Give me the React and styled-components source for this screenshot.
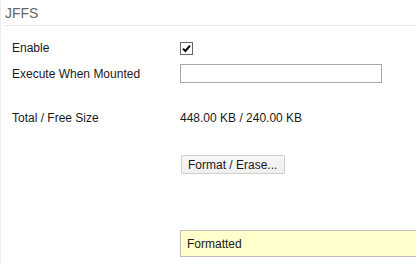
import React from "react";
import styled, { createGlobalStyle } from "styled-components";

const Global = createGlobalStyle`
  html, body { margin: 0; padding: 0; background: #fff; overflow: hidden; }
  body { font-family: "Liberation Sans", Arial, sans-serif; font-size: 12px; color: #1a1a1a; }
`;

const Page = styled.div`
  width: 416px;
  height: 264px;
  box-sizing: border-box;
  border-left: 1px solid #ededed;
  overflow: hidden;
`;

const Header = styled.div`
  margin-left: 4px;
  height: 25px;
  display: flex;
  align-items: center;
  border-bottom: 1px solid #e6e6e6;
  font-size: 14px;
  color: #666;
`;

const Row = styled.div`
  display: grid;
  grid-template-columns: 168px 1fr;
  align-items: center;
  padding-left: 11px;
  height: ${(p) => p.$h}px;
  margin-top: ${(p) => p.$mt}px;
`;

const Label = styled.div`
  color: #1a1a1a;
`;

const Value = styled.div`
  display: flex;
  align-items: center;
  color: #1a1a1a;
`;

const Check = styled.span`
  width: 11px;
  height: 11px;
  border: 1px solid #666;
  background: #fff;
  display: inline-flex;
  align-items: center;
  justify-content: center;
`;

const TextInput = styled.input`
  box-sizing: border-box;
  width: 202px;
  height: 19px;
  border: 1px solid #a9a9a9;
  margin: 0;
  padding: 0 3px;
  font: inherit;
  outline: none;
`;

const Button = styled.button`
  box-sizing: border-box;
  margin: 0 0 0 1px;
  height: 19px;
  width: 104px;
  padding: 0 6px;
  border: 1px solid #cfcfcf;
  background: linear-gradient(#f7f7f7, #efefef);
  font: inherit;
  color: #1a1a1a;
  text-align: left;
  border-radius: 1px;
`;

const Status = styled.div`
  box-sizing: border-box;
  width: 260px;
  height: 27px;
  background: #ffffcc;
  border: 1px solid #c9b8b8;
  display: flex;
  align-items: center;
  padding-left: 6px;
  color: #1a1a1a;
`;

export default function App() {
  return (
    <>
      <Global />
      <Page>
        <Header>JFFS</Header>
        <Row $h={20} $mt={12}>
          <Label>Enable</Label>
          <Value>
            <Check>
              <svg width="9" height="9" viewBox="0 0 9 9">
                <path d="M1 4.6 L3.4 7 L8 1.6" fill="none" stroke="#000" strokeWidth="2" />
              </svg>
            </Check>
          </Value>
        </Row>
        <Row $h={19} $mt={6}>
          <Label>Execute When Mounted</Label>
          <Value>
            <TextInput type="text" defaultValue="" />
          </Value>
        </Row>
        <Row $h={20} $mt={25}>
          <Label>Total / Free Size</Label>
          <Value>448.00 KB / 240.00 KB</Value>
        </Row>
        <Row $h={19} $mt={27}>
          <Label />
          <Value>
            <Button>Format / Erase...</Button>
          </Value>
        </Row>
        <Row $h={27} $mt={56}>
          <Label />
          <Value>
            <Status>Formatted</Status>
          </Value>
        </Row>
      </Page>
    </>
  );
}
